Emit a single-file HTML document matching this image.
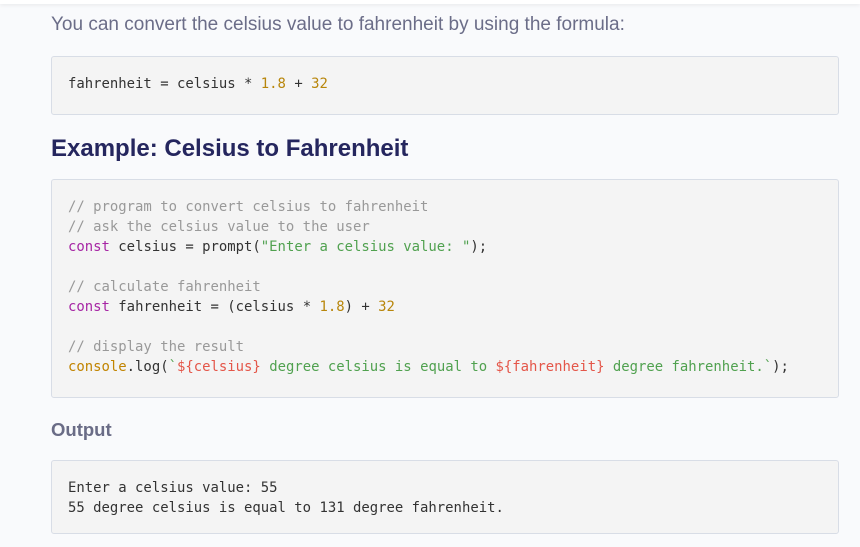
<!DOCTYPE html>
<html><head><style>
body{margin:0;width:860px;height:547px;background:#f9fafc;overflow:hidden;position:relative;font-family:"Liberation Sans",sans-serif}
.top{position:absolute;left:0;top:0;width:860px;height:4px;background:#fff;box-shadow:0 1px 4px rgba(0,0,0,.08)}
.p{position:absolute;left:51px;top:14px;font-size:19px;color:#6b6d88;white-space:nowrap}
.box{position:absolute;left:51px;width:788px;background:#f4f4f4;border:1px solid #d8dde6;border-radius:3px;box-sizing:border-box}
pre{margin:0;position:absolute;left:16px;font-family:"DejaVu Sans Mono","Liberation Mono",monospace;font-size:13.93px;line-height:20px;color:#333}
h2{position:absolute;left:51px;top:135px;margin:0;font-size:24px;color:#25265e;font-weight:bold;white-space:nowrap}
.out{position:absolute;left:51px;top:419px;font-size:18.5px;font-weight:bold;color:#6a6c86}
.c{color:#999}.k{color:#a626a4}.s{color:#50a14f}.n{color:#b8860b}.v{color:#e45649}.f{color:#c18401}
</style></head><body>
<div class="top"></div>
<div class="p">You can convert the celsius value to fahrenheit by using the formula:</div>
<div class="box" style="top:56px;height:59px"><pre style="top:17px">fahrenheit = celsius * <span class="n">1.8</span> + <span class="n">32</span></pre></div>
<h2>Example: Celsius to Fahrenheit</h2>
<div class="box" style="top:179px;height:219px"><pre style="top:17px"><span class="c">// program to convert celsius to fahrenheit</span>
<span class="c">// ask the celsius value to the user</span>
<span class="k">const</span> celsius = prompt(<span class="s">"Enter a celsius value: "</span>);

<span class="c">// calculate fahrenheit</span>
<span class="k">const</span> fahrenheit = (celsius * <span class="n">1.8</span>) + <span class="n">32</span>

<span class="c">// display the result</span>
<span class="f">console</span>.log(<span class="s">`</span><span class="v">${celsius}</span><span class="s"> degree celsius is equal to </span><span class="v">${fahrenheit}</span><span class="s"> degree fahrenheit.`</span>);</pre></div>
<div class="out">Output</div>
<div class="box" style="top:460px;height:74px"><pre style="top:17px">Enter a celsius value: 55
55 degree celsius is equal to 131 degree fahrenheit.</pre></div>
</body></html>
